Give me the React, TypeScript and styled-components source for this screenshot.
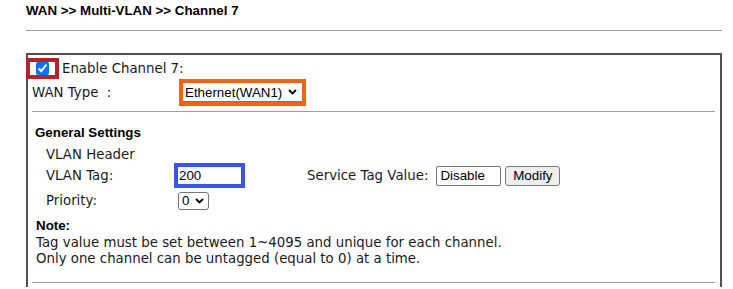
import styled, { createGlobalStyle } from "styled-components";

const GlobalStyle = createGlobalStyle`
  body {
    margin: 0;
    background: #ffffff;
    color: #1a1a1a;
    font-family: "DejaVu Sans", Verdana, sans-serif;
    font-size: 13.33px;
  }
`;

const Page = styled.div`
  width: 696px;
  padding: 3px 11px 0 26px;
`;

const PageTitle = styled.div`
  font-family: "Liberation Sans", Arial, sans-serif;
  font-weight: bold;
  font-size: 13.33px;
  line-height: 16px;
  color: #000;
  margin-bottom: 11px;
`;

const Rule = styled.div<{ $inset?: boolean }>`
  border-top: 1px solid #a0a0a0;
  margin: ${(p) => (p.$inset ? "0 5px 0 4px" : "0")};
`;

const Panel = styled.div`
  margin-top: 22px;
  border: 2px solid #505050;
  border-bottom: none;
  padding-bottom: 4px;
`;

const EnableRow = styled.div`
  display: flex;
  align-items: center;
  height: 21px;
  margin: 3px 0 0 -2px;
  line-height: 16px;
`;

const Highlight = styled.span<{ $color: string }>`
  box-sizing: border-box;
  display: flex;
  align-items: center;
  justify-content: center;
  border: 4px solid ${(p) => p.$color};
  flex: none;
`;

const CheckHighlight = styled(Highlight)`
  width: 33px;
  height: 21px;
`;

const Checkbox = styled.input`
  width: 13px;
  height: 13px;
  margin: 0;
  accent-color: #0075ff;
`;

const EnableLabel = styled.span`
  margin-left: 3px;
`;

const WanRow = styled.div`
  display: flex;
  align-items: center;
  height: 27px;
  padding-left: 4px;
`;

const WanLabel = styled.span`
  width: 147px;
  white-space: pre;
`;

const WanHighlight = styled(Highlight)`
  width: 127px;
  height: 27px;
`;

const UnderlineSelect = styled.div`
  box-sizing: border-box;
  width: 100%;
  height: 100%;
  display: flex;
  align-items: center;
  justify-content: space-between;
  padding: 0 5px 0 2px;
  border-bottom: 1px solid #767676;
  font-family: "Liberation Sans", Arial, sans-serif;
  font-size: 13.33px;
  color: #000;
`;

const SectionTitle = styled.div<{ $top: number }>`
  margin-top: ${(p) => p.$top}px;
  padding-left: ${(p) => (p.$top > 10 ? 7 : 8)}px;
  font-family: "Liberation Sans", Arial, sans-serif;
  font-weight: bold;
  line-height: 16px;
  color: #000;
`;

const FieldRow = styled.div<{ $height: number; $top?: number }>`
  display: grid;
  grid-template-columns: 128px auto auto auto auto 1fr;
  align-items: center;
  height: ${(p) => p.$height}px;
  margin-top: ${(p) => p.$top ?? 0}px;
  padding-left: 18px;
  line-height: 16px;
`;

const TagHighlight = styled(Highlight)`
  width: 71px;
  height: 25px;
`;

const PlainInput = styled.input`
  box-sizing: border-box;
  width: 100%;
  height: 100%;
  border: none;
  outline: none;
  padding: 0 1px;
  font-family: "Liberation Sans", Arial, sans-serif;
  font-size: 13.33px;
  color: #000;
`;

const ServiceLabel = styled.span`
  margin-left: 62px;
`;

const TextBox = styled.input`
  box-sizing: border-box;
  width: 65px;
  height: 20px;
  margin-left: 8px;
  padding: 0 3px;
  border: 1px solid #767676;
  border-radius: 2px;
  font-family: "Liberation Sans", Arial, sans-serif;
  font-size: 13.33px;
  color: #000;
`;

const Button = styled.button`
  box-sizing: border-box;
  width: 55px;
  height: 20px;
  margin-left: 4px;
  padding: 0;
  background: #efefef;
  border: 1px solid #767676;
  border-radius: 3px;
  font-family: "Liberation Sans", Arial, sans-serif;
  font-size: 13.33px;
  color: #000;
`;

const SmallSelect = styled.div`
  box-sizing: border-box;
  width: 31px;
  height: 18px;
  margin-left: 4px;
  display: flex;
  align-items: center;
  justify-content: space-between;
  padding: 0 4px 0 3px;
  border: 1px solid #767676;
  border-radius: 3px;
  font-family: "Liberation Sans", Arial, sans-serif;
  font-size: 13.33px;
  color: #000;
`;

const NoteText = styled.div`
  margin-top: 1px;
  padding-left: 8px;
  line-height: 16px;
`;

const BottomRule = styled(Rule)`
  margin-top: 15px;
`;

const Chevron = () => (
  <svg width="9" height="6" viewBox="0 0 9 6">
    <path d="M1 1 L4.5 4.5 L8 1" fill="none" stroke="#000" strokeWidth="1.8" />
  </svg>
);

export default function App() {
  return (
    <Page>
      <GlobalStyle />
      <PageTitle>WAN &gt;&gt; Multi-VLAN &gt;&gt; Channel 7</PageTitle>
      <Rule />
      <Panel>
        <EnableRow>
          <CheckHighlight $color="#b3232e">
            <Checkbox type="checkbox" defaultChecked />
          </CheckHighlight>
          <EnableLabel>Enable Channel 7:</EnableLabel>
        </EnableRow>
        <WanRow>
          <WanLabel>WAN Type  :</WanLabel>
          <WanHighlight $color="#f26412">
            <UnderlineSelect>
              Ethernet(WAN1)
              <Chevron />
            </UnderlineSelect>
          </WanHighlight>
        </WanRow>
        <div style={{ marginTop: 5 }}>
          <Rule $inset />
        </div>

        <SectionTitle $top={13}>General Settings</SectionTitle>
        <FieldRow $height={16} $top={6}>
          <span>VLAN Header</span>
        </FieldRow>
        <FieldRow $height={25}>
          <span>VLAN Tag:</span>
          <TagHighlight $color="#3b56e3">
            <PlainInput defaultValue="200" />
          </TagHighlight>
          <ServiceLabel>Service Tag Value:</ServiceLabel>
          <TextBox defaultValue="Disable" />
          <Button>Modify</Button>
        </FieldRow>
        <FieldRow $height={20} $top={3}>
          <span>Priority:</span>
          <SmallSelect>
            0
            <Chevron />
          </SmallSelect>
        </FieldRow>

        <SectionTitle $top={7}>Note:</SectionTitle>
        <NoteText>
          Tag value must be set between 1~4095 and unique for each channel.
          <br />
          Only one channel can be untagged (equal to 0) at a time.
        </NoteText>
        <BottomRule $inset />
      </Panel>
    </Page>
  );
}
